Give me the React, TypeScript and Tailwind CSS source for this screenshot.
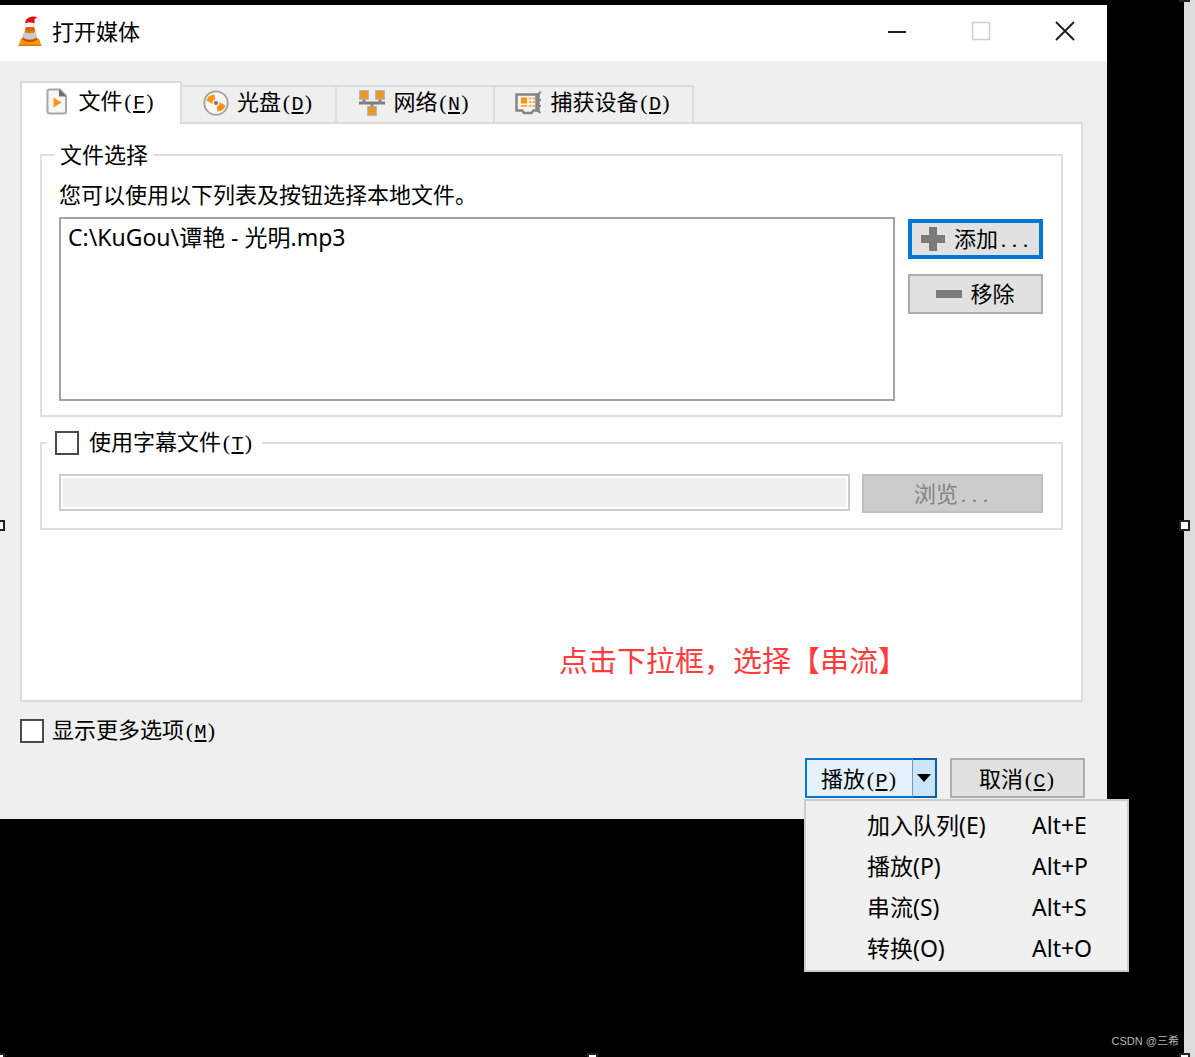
import { useState, type ReactNode } from "react";
import clsx from "clsx";

const TABS = [
  { id: "file", label: "文件", mnemonic: "F", Icon: FileIcon, width: "w-[162px]" },
  { id: "disc", label: "光盘", mnemonic: "D", Icon: DiscIcon, width: "w-[155px]" },
  { id: "network", label: "网络", mnemonic: "N", Icon: NetworkIcon, width: "w-[158px]" },
  { id: "capture", label: "捕获设备", mnemonic: "D", Icon: CaptureIcon, width: "w-[199px]" },
];

const MENU_ITEMS = [
  { label: "加入队列(E)", shortcut: "Alt+E" },
  { label: "播放(P)", shortcut: "Alt+P" },
  { label: "串流(S)", shortcut: "Alt+S" },
  { label: "转换(O)", shortcut: "Alt+O" },
];

function ConeIcon() {
  return (
    <svg width="24" height="32" viewBox="0 0 24 32" aria-hidden="true">
      <path d="M3 23.500h18L23.500 31H.5z" fill="#f9960f" />
      <path d="M.9 29.500h22.200l.4 1.500H.5z" fill="#e37b05" />
      <path d="M5 21h13.500l1 3.500q-7.500 5-15.500 0z" fill="#b9530a" />
      <path d="M8 12h8l3 11q-7.500 4-14.500 0z" fill="#ea780c" />
      <path d="M6.300 17q5.500 2.500 11.200 0l1.500 5.500q-7 4-14.200 0z" fill="#c9cccd" />
      <path d="M8 12h8l.8 3q-4.800 2-9.600 0z" fill="#d1640a" />
      <path d="M7 8.500C7.500 3 13 .2 20 2.200c-2.500.5-3.500 1.500-3.500 3.300v3.500q-5-2-9.500-.5z" fill="#dc1010" />
      <path d="M6.500 8.500q5-2 11 0V12q-5.500-1.800-11-.3z" fill="#f4eaea" />
      <circle cx="21" cy="4.500" r="1.500" fill="#f5e4e4" />
    </svg>
  );
}

function FileIcon() {
  return (
    <svg width="24" height="27" viewBox="0 0 24 27" aria-hidden="true">
      <path d="M3.500 1.500H14l6 6.500v15.500q0 2-2 2H3.500q-2 0-2-2v-20q0-2 2-2z" fill="#f6f6f6" stroke="#a8a8a8" strokeWidth="2" />
      <path d="M13 1v7.500h7.500z" fill="#6f6f6f" />
      <path d="M7.500 9.500l8 5-8 5z" fill="#ff9311" />
    </svg>
  );
}

function DiscIcon() {
  return (
    <svg width="26" height="26" viewBox="0 0 26 26" aria-hidden="true">
      <circle cx="13" cy="13" r="11.700" fill="#f7f7f7" stroke="#a0a0a0" strokeWidth="1.800" />
      <path d="M10.500 14.500L3.500 10.500Q5 5 11.500 4.500l1 6z" fill="#ff9311" />
      <path d="M15.500 11.500l7 4Q21 21 14.500 21.500l-1-6z" fill="#ff9311" />
      <circle cx="13" cy="13" r="3.500" fill="#f2f2f2" />
      <circle cx="13" cy="13" r="2" fill="#777" />
    </svg>
  );
}

function NetworkIcon() {
  return (
    <svg width="26" height="26" viewBox="0 0 26 26" aria-hidden="true">
      <path d="M5 9v4M21 9v4M13 13v4" stroke="#8c8c8c" strokeWidth="3" />
      <path d="M0 11.500h26v3H0z" fill="#7d7d7d" />
      <g fill="#ff9311" stroke="#b3a48e" strokeWidth="1.500">
        <rect x="1" y="1" width="8" height="8" />
        <rect x="17" y="1" width="8" height="8" />
        <rect x="9" y="17" width="8" height="8" />
      </g>
    </svg>
  );
}

function CaptureIcon() {
  return (
    <svg width="27" height="24" viewBox="0 0 27 24" aria-hidden="true">
      <path d="M1.500 3.500h20v16h-3l-2 2.500H9l-2-2.500H1.500z" fill="#f7f2ea" stroke="#858585" strokeWidth="2.500" />
      <path d="M23 3.500v17" stroke="#858585" strokeWidth="3.500" />
      <path d="M22 3.500q2.500 0 3.500-3M23 9h3M23 15h3M22 20q2 0 3.500 2" fill="none" stroke="#858585" strokeWidth="2" />
      <path d="M6 6.500h6v6H6z" fill="#ff9311" />
      <path d="M14 7.500h2.200m1.500 0H20M14 11h2.200m1.500 0H20M14 15h2.200m1.500 0H20M6 15h6" stroke="#ffad4d" strokeWidth="1.800" />
    </svg>
  );
}

// Each Latin character takes half the width of a Chinese one
function Half({ children, mono }: { children: ReactNode; mono?: boolean }) {
  return (
    <span
      className={clsx(
        "inline-flex w-[11px] justify-center leading-none",
        mono ? "font-['Liberation_Mono',monospace] text-[20px]" : "font-['Liberation_Serif',serif]"
      )}
    >
      {children}
    </span>
  );
}

function Label({ text, mnemonic }: { text: string; mnemonic: string }) {
  return (
    <span className="pb-1 whitespace-nowrap">
      {text}
      <Half>(</Half>
      <Half mono>
        <span className="underline underline-offset-2">{mnemonic}</span>
      </Half>
      <Half>)</Half>
    </span>
  );
}

function Ellipsis() {
  return (
    <>
      <Half>.</Half>
      <Half>.</Half>
      <Half>.</Half>
    </>
  );
}

function TitleBar() {
  return (
    <header className="flex h-14 items-center bg-white pb-1 pl-[18px]">
      <ConeIcon />
      <h1 className="ml-2.5 flex-1 pb-0.5">打开媒体</h1>
      <button type="button" aria-label="最小化" className="flex h-full w-[84px] items-center justify-center">
        <svg width="20" height="20" viewBox="0 0 20 20">
          <path d="M1 11h18" stroke="#222" strokeWidth="2" />
        </svg>
      </button>
      <button type="button" aria-label="最大化" disabled className="flex h-full w-[84px] items-center justify-center">
        <svg width="20" height="20" viewBox="0 0 20 20">
          <path d="M1.500 1.500h17v17h-17z" fill="none" stroke="#cfcfcf" strokeWidth="1.500" />
        </svg>
      </button>
      <button type="button" aria-label="关闭" className="flex h-full w-[84px] items-center justify-center">
        <svg width="20" height="20" viewBox="0 0 20 20">
          <path d="M1 1l18 18M19 1L1 19" stroke="#1a1a1a" strokeWidth="1.800" />
        </svg>
      </button>
    </header>
  );
}

function FileSelection() {
  return (
    <fieldset className="border-2 border-[#dfdfdf] pr-[18px] pb-3.5 pl-[17px]">
      <legend className="-ml-1 px-[5px] pb-1">文件选择</legend>
      <p className="mt-2 pb-1">您可以使用以下列表及按钮选择本地文件。</p>
      <div className="mt-[6px] flex gap-[13px]">
        <ul className="h-[184px] flex-1 border-2 border-[#a0a3ac] bg-white px-[7px] py-1">
          <li className="font-['Noto_Sans','Noto_Sans_CJK_SC',sans-serif] text-[23px]">C:\KuGou\谭艳 - 光明.mp3</li>
        </ul>
        <div className="flex w-[135px] flex-col gap-[15px] pt-0.5">
          <button type="button" className="flex h-10 items-center justify-center gap-2 border-4 border-[#0078d7] bg-[#e1e1e1]">
            <svg width="26" height="26" viewBox="0 0 26 26" aria-hidden="true">
              <path d="M9 1h8v8h8v8h-8v8H9v-8H1V9h8z" fill="#7b7b7b" />
            </svg>
            <span className="pb-1">
              添加
              <Ellipsis />
            </span>
          </button>
          <button type="button" className="flex h-10 items-center justify-center gap-2 border-2 border-[#adadad] bg-[#e1e1e1]">
            <svg width="26" height="26" viewBox="0 0 26 26" aria-hidden="true">
              <path d="M0 9h26v8H0z" fill="#7b7b7b" />
            </svg>
            <span className="pb-1">移除</span>
          </button>
        </div>
      </div>
    </fieldset>
  );
}

function SubtitleSelection() {
  return (
    <fieldset className="mt-[9px] border-2 border-[#dfdfdf] pr-[18px] pb-[15px] pl-[17px]">
      <legend className="-ml-3 px-2">
        <label className="flex items-center gap-2.5">
          <input type="checkbox" className="size-6 appearance-none border-2 border-[#4a4a4a] bg-white" />
          <Label text="使用字幕文件" mnemonic="T" />
        </label>
      </legend>
      <div className="mt-[15px] flex items-start gap-3">
        <input
          type="text"
          disabled
          aria-label="字幕文件"
          className="h-[37px] min-w-0 flex-1 border-2 border-[#cccccc] bg-[#efefef] outline-2 -outline-offset-4 outline-white"
        />
        <button type="button" disabled className="h-[39px] w-[181px] border-2 border-[#bfbfbf] bg-[#cccccc] pb-1 text-[#838383]">
          浏览
          <Ellipsis />
        </button>
      </div>
    </fieldset>
  );
}

function PlayMenu() {
  return (
    <div
      role="menu"
      className="absolute top-full -left-px mt-px w-[325px] border-2 border-[#cccccc] bg-[#f0f0f0] pt-[3px] pb-0.5 font-['Noto_Sans','Noto_Sans_CJK_SC',sans-serif] text-[23px]"
    >
      {MENU_ITEMS.map((item) => (
        <button key={item.shortcut} type="button" role="menuitem" className="flex h-[41px] w-full items-center pl-[61px] text-left">
          <span className="w-[165px]">{item.label}</span>
          <span>{item.shortcut}</span>
        </button>
      ))}
    </div>
  );
}

function Handle({ className }: { className: string }) {
  return <span className={clsx("absolute size-[11px] border-2 border-[#222] bg-white", className)} />;
}

export default function App() {
  const [activeTab, setActiveTab] = useState("file");
  const [menuOpen, setMenuOpen] = useState(true);

  return (
    <div className="relative flex min-h-screen overflow-hidden bg-black font-['Noto_Sans_CJK_SC',sans-serif] text-[22px] leading-7 text-black">
      <main className="flex-1 pt-[5px] pr-[77px]">
        <section className="bg-[#efefef]">
          <TitleBar />
          <div className="pt-5 pr-6 pl-5">
            <div role="tablist" className="flex h-[43px] items-end">
              {TABS.map(({ id, label, mnemonic, Icon, width }) => (
                <button
                  key={id}
                  type="button"
                  role="tab"
                  aria-selected={activeTab === id}
                  onClick={() => setActiveTab(id)}
                  className={clsx(
                    "flex items-center justify-center gap-2 border-t-2 border-r-2 border-[#dcdcdc]",
                    width,
                    activeTab === id ? "h-[43px] border-l-2 bg-white pb-1" : "h-[39px] border-b-2 pb-1"
                  )}
                >
                  <Icon />
                  <Label text={label} mnemonic={mnemonic} />
                </button>
              ))}
              <div className="flex-1 border-b-2 border-[#dcdcdc]" />
            </div>
            <div role="tabpanel" className="flex h-[578px] flex-col border-2 border-t-0 border-[#dcdcdc] bg-white px-[18px] pt-[15px]">
              <FileSelection />
              <SubtitleSelection />
              <p className="mt-[115px] mr-[156px] self-end text-[29px] text-[#ff3b3b]">点击下拉框，选择【串流】</p>
            </div>
            <label className="mt-3 flex items-center gap-2">
              <input type="checkbox" className="size-6 appearance-none border-2 border-[#4a4a4a] bg-white" />
              <Label text="显示更多选项" mnemonic="M" />
            </label>
          </div>
          <footer className="flex justify-end gap-[13px] pt-[11px] pr-[22px] pb-[21px]">
            <div className="relative flex h-10 w-[132px]">
              <button type="button" className="flex-1 border-2 border-r-0 border-[#0078d7] bg-[#e5f1fb] pb-0.5">
                <Label text="播放" mnemonic="P" />
              </button>
              <button
                type="button"
                aria-label="更多播放方式"
                aria-expanded={menuOpen}
                onClick={() => setMenuOpen(!menuOpen)}
                className="flex w-[25px] items-center justify-center border-2 border-l border-[#0063b1] border-l-[#8a949c] bg-[#cce4f7]"
              >
                <svg width="14" height="8" viewBox="0 0 14 8" aria-hidden="true">
                  <path d="M0 0h14L7 8z" fill="#000" />
                </svg>
              </button>
              {menuOpen && <PlayMenu />}
            </div>
            <button type="button" className="h-10 w-[135px] border-2 border-[#adadad] bg-[#e1e1e1] pb-0.5">
              <Label text="取消" mnemonic="C" />
            </button>
          </footer>
        </section>
      </main>
      <div className="w-[11px] bg-[#dddddd]" />

      <Handle className="top-[520px] -left-[6px]" />
      <Handle className="top-[520px] right-[5px]" />
      <Handle className="right-[5px] -bottom-[7px]" />
      <Handle className="-bottom-[7px] left-[587px]" />
      <Handle className="-bottom-[7px] -left-[6px]" />
      <Handle className="-top-[9px] right-[5px]" />
      <span className="absolute right-4 bottom-[7px] font-['Liberation_Sans','Noto_Sans_CJK_SC',sans-serif] text-[11px] leading-[18px] text-[#b5b5b5]">
        CSDN @三希
      </span>
    </div>
  );
}
